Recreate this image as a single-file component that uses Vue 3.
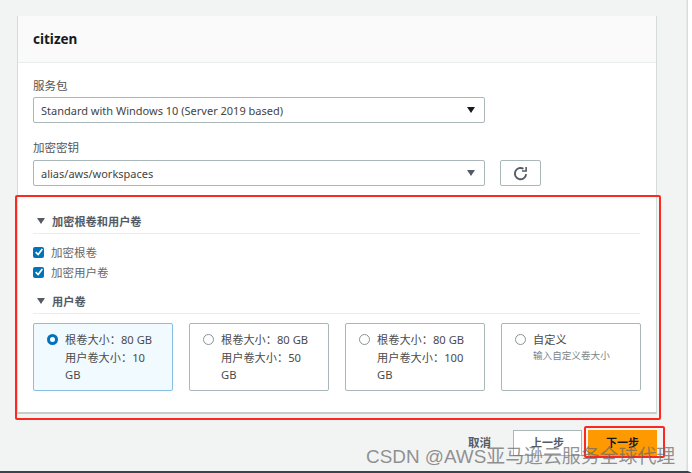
<script setup>
const tiles = [
  { lines: ['根卷大小：80 GB', '用户卷大小：10 GB'], selected: true },
  { lines: ['根卷大小：80 GB', '用户卷大小：50 GB'] },
  { lines: ['根卷大小：80 GB', '用户卷大小：100 GB'] },
]
</script>

<template>
  <div class="page">
    <div class="card">
      <div class="card-head">citizen</div>
      <div class="card-body">
        <div class="label">服务包</div>
        <div class="select dark">
          <span>Standard with Windows 10 (Server 2019 based)</span>
          <i class="caret"></i>
        </div>
        <div class="label second">加密密钥</div>
        <div class="key-row">
          <div class="select">
            <span>alias/aws/workspaces</span>
            <i class="caret"></i>
          </div>
          <button class="refresh" aria-label="refresh">
            <svg viewBox="0 0 16 16" width="15" height="15" fill="none" stroke="#545b64" stroke-width="2">
              <path d="M14 8.6A6 6 0 1 1 11.2 3" />
              <path d="M14 1v4.4H9.6" stroke-width="1.7" />
            </svg>
          </button>
        </div>
        <div class="section-head first"><i class="tri"></i>加密根卷和用户卷</div>
        <label class="check"><span class="box"><svg viewBox="0 0 12 12" width="10" height="10" fill="none" stroke="#fff" stroke-width="2"><path d="M2 6.2 5 9l5-6.5" /></svg></span>加密根卷</label>
        <label class="check"><span class="box"><svg viewBox="0 0 12 12" width="10" height="10" fill="none" stroke="#fff" stroke-width="2"><path d="M2 6.2 5 9l5-6.5" /></svg></span>加密用户卷</label>
        <div class="section-head"><i class="tri"></i>用户卷</div>
        <div class="tiles">
          <div v-for="(t, i) in tiles" :key="i" class="tile" :class="{ on: t.selected }">
            <span class="radio"></span>
            <div class="tile-text"><div v-for="l in t.lines" :key="l">{{ l }}</div></div>
          </div>
          <div class="tile">
            <span class="radio"></span>
            <div class="tile-text">
              <div>自定义</div>
              <div class="hint">输入自定义卷大小</div>
            </div>
          </div>
        </div>
      </div>
    </div>
    <div class="footer">
      <span class="cancel">取消</span>
      <span class="btn prev">上一步</span>
      <span class="btn next">下一步</span>
    </div>
    <div class="mark mark-a"></div>
    <div class="mark mark-b"></div>
    <div class="watermark">CSDN @AWS亚马逊云服务全球代理</div>
  </div>
</template>

<style scoped>
.page {
  position: relative;
  width: 692px;
  height: 473px;
  box-sizing: border-box;
  overflow: hidden;
  padding: 16px 31px 0 17px;
  background: #f2f3f3;
  border-right: 4px solid #fff;
  border-bottom: 2px solid #3a434e;
  box-shadow: inset -1.5px 0 0 #d8dcdc;
  font-family: "Noto Sans", "Noto Sans CJK SC", sans-serif;
  font-size: 11px;
  color: #16191f;
}
.card {
  background: #fff;
  border-left: 1px solid #d5dbdb;
  border-right: 1px solid #d5dbdb;
  border-bottom: 2px solid #c6cccc;
  height: 398px;
  box-sizing: border-box;
}
.card-head {
  height: 47px;
  box-sizing: border-box;
  padding-left: 15px;
  line-height: 47px;
  background: #fafafa;
  border-bottom: 1px solid #eaeded;
  font-size: 13.5px;
  font-weight: 700;
}
.card-body { padding: 14px 15px 0; }
.label { height: 20px; line-height: 17px; color: #555; font-size: 11.5px; }
.second { margin-top: 15px; height: 22px; line-height: 19px; }
.select {
  display: flex;
  align-items: center;
  justify-content: space-between;
  width: 452px;
  height: 26px;
  box-sizing: border-box;
  padding: 0 9px 0 7px;
  background: #fff;
  border: 1px solid #aab7b8;
  border-radius: 2px;
  color: #444;
}
.caret {
  width: 0;
  height: 0;
  border-left: 4.5px solid transparent;
  border-right: 4.5px solid transparent;
  border-top: 6px solid #545b64;
}
.dark .caret { border-top-color: #16191f; }
.key-row { display: flex; gap: 15px; }
.refresh {
  display: flex;
  align-items: center;
  justify-content: center;
  width: 41px;
  height: 26px;
  padding: 0;
  background: #fff;
  border: 1px solid #aab7b8;
  border-radius: 2px;
}
.section-head {
  display: flex;
  align-items: center;
  height: 25px;
  margin-top: 7px;
  padding-left: 4px;
  border-bottom: 1px solid #eaeded;
  font-weight: 700;
  font-size: 11.2px;
  color: #545b64;
  width: 607px;
  box-sizing: border-box;
}
.first { margin-top: 22px; margin-bottom: 8px; height: 26px; }
.tri {
  width: 0;
  height: 0;
  margin-right: 7px;
  border-left: 4.5px solid transparent;
  border-right: 4.5px solid transparent;
  border-top: 6px solid #545b64;
}
.check {
  display: flex;
  align-items: center;
  gap: 7px;
  height: 20px;
  color: #666;
  font-size: 11.5px;
}
.box {
  display: flex;
  align-items: center;
  justify-content: center;
  width: 11px;
  height: 11px;
  background: #0073bb;
  border-radius: 2px;
}
.tiles {
  display: grid;
  grid-template-columns: repeat(4, 140px);
  column-gap: 16px;
  margin-top: 9px;
}
.tile {
  display: flex;
  height: 68px;
  box-sizing: border-box;
  padding: 7px 10px 0 13px;
  background: #fff;
  border: 1px solid #aab7b8;
  border-radius: 2px;
}
.tile.on {
  background: #f1faff;
  border-color: #85bfe4;
}
.radio {
  flex: none;
  width: 11px;
  height: 11px;
  margin: 3px 7px 0 0;
  box-sizing: border-box;
  border: 1px solid #879596;
  border-radius: 50%;
  background: #fff;
}
.on .radio { border: 3.5px solid #0073bb; }
.tile-text { line-height: 17.6px; color: #4a4a4a; font-size: 11.2px; }
.hint { font-size: 9.6px; line-height: 14px; color: #7b8585; }
.footer {
  display: flex;
  align-items: center;
  justify-content: flex-end;
  height: 26px;
  margin-top: 16px;
  font-weight: 700;
  font-size: 11px;
}
.cancel { margin-right: 22px; color: #545b64; font-size: 11.5px; padding-bottom: 2px; }
.btn {
  display: flex;
  align-items: center;
  justify-content: center;
  box-sizing: border-box;
  height: 26px;
  padding-bottom: 2px;
}
.prev {
  width: 69px;
  margin-right: 6px;
  background: #fff;
  border: 1px solid #aab7b8;
  color: #545b64;
}
.next { width: 69px; background: #ff9900; color: #16191f; }
.mark {
  position: absolute;
  box-sizing: border-box;
  border: 2px solid #fb2a20;
  border-radius: 2px;
}
.mark-a { left: 15px; top: 195px; width: 646px; height: 225px; }
.mark-b { left: 584px; top: 426px; width: 81px; height: 32px; }
.watermark {
  position: absolute;
  left: 366px;
  top: 441px;
  font-family: "Liberation Sans", "Noto Sans CJK SC", sans-serif;
  font-size: 18.9px;
  white-space: nowrap;
  color: rgba(105, 105, 105, 0.72);
}
</style>
